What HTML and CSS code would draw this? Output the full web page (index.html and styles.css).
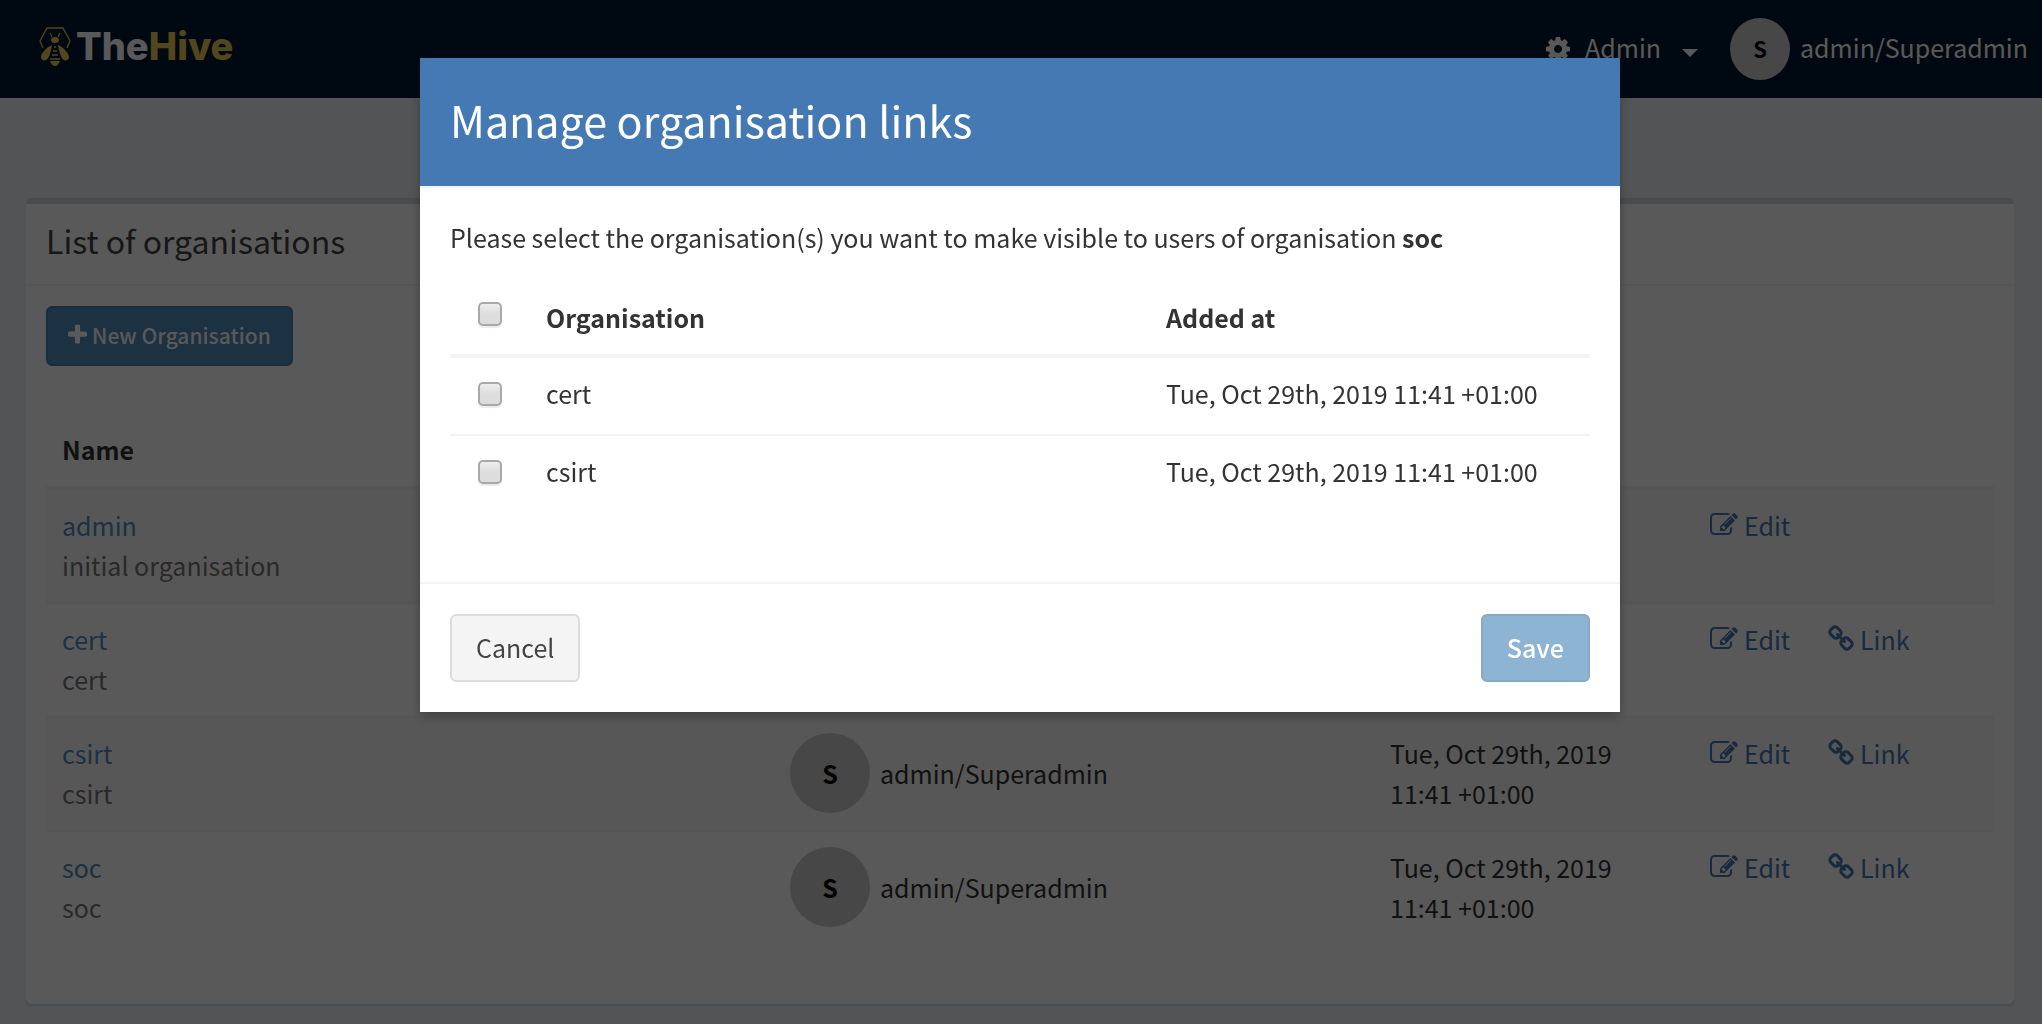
FILE: index.html
```html
<!DOCTYPE html>
<html lang="en">
<head>
<meta charset="utf-8">
<title>TheHive</title>
<link rel="stylesheet" href="styles.css">
</head>
<body>
<svg class="sprite" aria-hidden="true">
  <symbol id="i-plus" viewBox="192 0 1408 1792"><path d="M1600 736v192q0 40-28 68t-68 28h-416v416q0 40-28 68t-68 28h-192q-40 0-68-28t-28-68v-416h-416q-40 0-68-28t-28-68v-192q0-40 28-68t68-28h416v-416q0-40 28-68t68-28h192q40 0 68 28t28 68v416h416q40 0 68 28t28 68z"/></symbol>
  <symbol id="i-cog" viewBox="128 0 1536 1792"><path d="M1152 896q0-106-75-181t-181-75-181 75-75 181 75 181 181 75 181-75 75-181zm512-109v222q0 12-8 23t-20 13l-185 28q-19 54-39 91 35 50 107 138 10 12 10 25t-9 23q-27 37-99 108t-94 71q-12 0-26-9l-138-108q-44 23-91 38-16 136-29 186-7 28-36 28h-222q-14 0-24.500-8.500t-11.500-21.500l-28-184q-49-16-90-37l-141 107q-10 9-25 9-14 0-25-11-126-114-165-168-7-10-7-23 0-12 8-23 15-21 51-66.500t54-70.500q-27-50-41-99l-183-27q-13-2-21-12.500t-8-23.500v-222q0-12 8-23t19-13l186-28q14-46 39-92-40-57-107-138-10-12-10-24 0-10 9-23 26-36 98.500-107.500t94.500-71.500q13 0 26 10l138 107q44-23 91-38 16-136 29-186 7-28 36-28h222q14 0 24.500 8.500t11.500 21.500l28 184q49 16 90 37l142-107q9-9 24-9 13 0 25 10 129 119 165 170 7 8 7 22 0 12-8 23-15 21-51 66.500t-54 70.500q26 50 41 98l183 28q13 2 21 12.500t8 23.500z"/></symbol>
  <symbol id="i-edit" viewBox="0 0 1792 1792"><path d="M888 1184l116-116-152-152-116 116v56h96v96h56zm440-720q-16-16-33 1l-350 350q-17 17-1 33t33-1l350-350q17-17 1-33zm80 594v190q0 119-84.500 203.500t-203.500 84.500h-832q-119 0-203.500-84.500t-84.500-203.500v-832q0-119 84.500-203.500t203.500-84.500h832q63 0 117 25 15 7 18 23 3 17-9 29l-49 49q-14 14-32 8-23-6-45-6h-832q-66 0-113 47t-47 113v832q0 66 47 113t113 47h832q66 0 113-47t47-113v-126q0-13 9-22l64-64q15-15 35-7t20 29zm-96-738l288 288-672 672h-288v-288zm444 132l-92 92-288-288 92-92q28-28 68-28t68 28l152 152q28 28 28 68t-28 68z"/></symbol>
  <symbol id="i-link" viewBox="64 0 1664 1792"><path d="M1520 1216q0-40-28-68l-208-208q-28-28-68-28-42 0-72 32 3 3 19 18.500t21.500 21.500 15 19 13 25.500 3.500 27.500q0 40-28 68t-68 28q-15 0-27.500-3.500t-25.500-13-19-15-21.500-21.500-18.500-19q-33 31-33 73 0 40 28 68l206 207q27 27 68 27 40 0 68-26l147-146q28-28 28-67zm-703-705q0-40-28-68l-206-207q-28-28-68-28-39 0-68 27l-147 146q-28 28-28 67 0 40 28 68l208 208q27 27 68 27 42 0 72-31-3-3-19-18.500t-21.500-21.500-15-19-13-25.500-3.500-27.500q0-40 28-68t68-28q15 0 27.500 3.500t25.500 13 19 15 21.500 21.500 18.500 19q33-31 33-73zm895 705q0 120-85 203l-147 146q-83 83-203 83-121 0-204-85l-206-207q-83-83-83-203 0-123 88-209l-88-88q-86 88-208 88-120 0-204-84l-208-208q-84-84-84-204t85-203l147-146q83-83 203-83 121 0 204 85l206 207q83 83 83 203 0 123-88 209l88 88q86-88 208-88 120 0 204 84l208 208q84 84 84 204z"/></symbol>
</svg>

<header class="navbar">
  <a class="brand" href="#">
    <svg class="brand-mark" viewBox="0 0 32 40" aria-hidden="true">
      <path class="line" d="M4 21 L1 14 L8 1 H24 L31 14 L28 21"/>
      <path class="line" d="M11 6 L13 10 M21 6 L19 10"/>
      <ellipse cx="16" cy="13" rx="4" ry="3"/>
      <path d="M13 18 C9 19 2 26 2 30 C2 33 5 34 7 33 C10 32 12 24 13 18Z"/>
      <path d="M19 18 C23 19 30 26 30 30 C30 33 27 34 25 33 C22 32 20 24 19 18Z"/>
      <path class="line" d="M15 20 H17 M14 24 H18 M13 28 H19 M11 32 H21"/>
      <path d="M11 34 H21 C20 37 18 39 16 39 C14 39 12 37 11 34Z"/>
    </svg>
    <span class="brand-name">The<span class="brand-hive">Hive</span></span>
  </a>
  <nav class="nav">
    <a class="nav-item" href="#"><svg class="icon cog" aria-hidden="true"><use href="#i-cog"/></svg><span class="nav-label">Admin</span><span class="caret"></span></a>
    <a class="nav-user" href="#"><span class="avatar small">S</span><span class="nav-label">admin/Superadmin</span></a>
  </nav>
</header>

<main class="content">
  <section class="box">
    <h1 class="box-title">List of organisations</h1>
    <div class="box-body">
      <button class="btn btn-new" type="button"><svg class="icon plus" aria-hidden="true"><use href="#i-plus"/></svg>New Organisation</button>
      <table class="orgs">
        <colgroup><col><col class="c-user"><col class="c-date"><col class="c-actions"></colgroup>
        <thead><tr><th>Name</th><th></th><th></th><th></th></tr></thead>
        <tbody>
          <tr>
            <td><a href="#">admin</a><div class="muted">initial organisation</div></td>
            <td></td>
            <td></td>
            <td><div class="actions"><a href="#"><svg class="icon edit" aria-hidden="true"><use href="#i-edit"/></svg>Edit</a></div></td>
          </tr>
          <tr>
            <td><a href="#">cert</a><div class="muted">cert</div></td>
            <td></td>
            <td></td>
            <td><div class="actions"><a href="#"><svg class="icon edit" aria-hidden="true"><use href="#i-edit"/></svg>Edit</a><a href="#"><svg class="icon link" aria-hidden="true"><use href="#i-link"/></svg>Link</a></div></td>
          </tr>
          <tr>
            <td><a href="#">csirt</a><div class="muted">csirt</div></td>
            <td><div class="user"><span class="avatar">S</span>admin/Superadmin</div></td>
            <td>Tue, Oct 29th, 2019 11:41 +01:00</td>
            <td><div class="actions"><a href="#"><svg class="icon edit" aria-hidden="true"><use href="#i-edit"/></svg>Edit</a><a href="#"><svg class="icon link" aria-hidden="true"><use href="#i-link"/></svg>Link</a></div></td>
          </tr>
          <tr>
            <td><a href="#">soc</a><div class="muted">soc</div></td>
            <td><div class="user"><span class="avatar">S</span>admin/Superadmin</div></td>
            <td>Tue, Oct 29th, 2019 11:41 +01:00</td>
            <td><div class="actions"><a href="#"><svg class="icon edit" aria-hidden="true"><use href="#i-edit"/></svg>Edit</a><a href="#"><svg class="icon link" aria-hidden="true"><use href="#i-link"/></svg>Link</a></div></td>
          </tr>
        </tbody>
      </table>
    </div>
  </section>
</main>

<div class="backdrop">
  <div class="modal" role="dialog" aria-modal="true" aria-labelledby="modal-title">
    <h2 class="modal-title" id="modal-title">Manage organisation links</h2>
    <form class="modal-body" id="links-form">
      <p>Please select the organisation(s) you want to make visible to users of organisation <strong>soc</strong></p>
      <table class="links">
        <colgroup><col class="c-check"><col><col class="c-added"></colgroup>
        <thead><tr><th><input type="checkbox" id="all" aria-label="Select all"></th><th>Organisation</th><th>Added at</th></tr></thead>
        <tbody>
          <tr><td><input type="checkbox" id="cert"></td><td><label for="cert">cert</label></td><td>Tue, Oct 29th, 2019 11:41 +01:00</td></tr>
          <tr><td><input type="checkbox" id="csirt"></td><td><label for="csirt">csirt</label></td><td>Tue, Oct 29th, 2019 11:41 +01:00</td></tr>
        </tbody>
      </table>
    </form>
    <div class="modal-footer">
      <button class="btn btn-default" type="button">Cancel</button>
      <button class="btn btn-save" type="submit" form="links-form" disabled>Save</button>
    </div>
  </div>
</div>
</body>
</html>
```
FILE: styles.css
```css
* { box-sizing: border-box; }

body {
  margin: 0;
  background: #ecf0f5;
  color: #333;
  font: 25px/40px "Noto Sans CJK SC", "Noto Sans", sans-serif;
}

a { color: #518cbb; text-decoration: none; }
button { font: inherit; }
.sprite { position: absolute; width: 0; height: 0; }

.icon { flex: none; height: 28px; fill: currentColor; }
.icon.cog { width: 24px; }
.icon.edit { width: 28px; }
.icon.link { width: 26px; }
.icon.plus { width: 19px; height: 24px; }

/* Navigation */
.navbar {
  display: flex;
  justify-content: space-between;
  align-items: center;
  height: 98px;
  padding: 0 14px 0 39px;
  background: #021a33;
}
.brand { display: flex; align-items: center; gap: 5px; padding-bottom: 4px; color: #fff; }
.brand-mark { width: 32px; height: 40px; fill: #eac850; }
.brand-mark .line { fill: none; stroke: #eac850; stroke-width: 1.3; }
.brand-name { padding-bottom: 2px; font: 800 38px/40px Inter, sans-serif; }
.brand-hive { color: #eac850; }
.nav { display: flex; align-items: center; gap: 32px; }
.nav a { display: flex; align-items: center; color: #fff; }
.nav-item { gap: 15px; }
.nav-label { padding-bottom: 4px; }
.nav .nav-user { gap: 10px; }
.caret {
  margin: 8px 0 0 6px;
  border: 8px solid transparent;
  border-top-color: currentColor;
  border-bottom: 0;
}

.avatar {
  display: flex;
  flex: none;
  align-items: center;
  justify-content: center;
  width: 80px;
  height: 80px;
  border-radius: 50%;
  background: #ccc;
  color: #000;
  font-weight: 700;
}
.avatar.small { width: 60px; height: 62px; padding-bottom: 2px; font-size: 22px; }

/* Organisation list */
.content { padding: 100px 28px 20px 26px; }
.box {
  border-top: 6px solid #d2d6de;
  border-radius: 6px;
  background: #fff;
  box-shadow: 0 2px 2px rgba(0, 0, 0, .1);
}
.box-title {
  margin: 0;
  padding: 16px 20px 24px;
  border-bottom: 2px solid #f4f4f4;
  color: #444;
  font-size: 32px;
  font-weight: 400;
}
.box-body { padding: 20px; }

.btn {
  display: inline-flex;
  align-items: center;
  justify-content: center;
  padding: 11px 24px 13px;
  border: 2px solid;
  border-radius: 6px;
}
.btn-new {
  gap: 5px;
  height: 60px;
  padding: 0 20px 2px;
  border-color: #4a80ab;
  background: #518cbb;
  color: #fff;
  font-size: 21px;
  font-weight: 500;
}

table { width: 100%; border-collapse: collapse; table-layout: fixed; }
th, td { padding: 15px 16px 17px; text-align: left; vertical-align: top; }
th { border-bottom: 4px solid #f4f4f4; }
tr + tr td { border-top: 2px solid #f4f4f4; }

.orgs { margin: 48px 0 40px; }
.orgs tbody tr:nth-child(odd) { background: #f9f9f9; }
.c-user { width: 600px; }
.c-date { width: 320px; }
.c-actions { width: 300px; }
.muted { color: #777; }
.user { display: flex; align-items: center; gap: 10px; }
.actions { display: grid; grid-template-columns: 118px 1fr; }
.actions a { display: flex; align-items: center; gap: 6px; color: #4579b3; }

/* Modal */
.backdrop {
  position: fixed;
  inset: 0;
  padding: 58px 2px 0 0;
  background: rgba(0, 0, 0, .65);
}
.modal {
  max-width: 1200px;
  margin: 0 auto;
  background: #fff;
  box-shadow: 0 4px 10px rgba(0, 0, 0, .3);
}
.modal-title {
  margin: 0;
  padding: 27px 30px 33px;
  border-bottom: 2px solid #f4f4f4;
  background: #4579b3;
  background-clip: padding-box;
  color: #fff;
  font-size: 43px;
  font-weight: 400;
  line-height: 68px;
}
.modal-body { padding: 29px 30px 30px; }
.modal-body p { margin: 0 0 21px; }
.links { margin-bottom: 40px; }
.links tr { height: 76px; }
.links th { vertical-align: bottom; }
.c-check { width: 80px; }
.c-added { width: 440px; }
.links input {
  display: block;
  appearance: none;
  width: 24px;
  height: 24px;
  margin: 9px auto 11px;
  border: 2px solid #a9a9a9;
  border-radius: 5px;
  background: linear-gradient(#eee, #ddd 50%);
  box-shadow: 0 2px 1px rgba(0, 0, 0, .08);
}
.modal-footer {
  display: flex;
  justify-content: space-between;
  padding: 30px;
  border-top: 2px solid #f4f4f4;
}
.btn-default { border-color: #ddd; background: #f4f4f4; color: #444; }
.btn-save { border-color: #86abc9; background: #8eb4d3; color: #fff; font-weight: 500; }
```
